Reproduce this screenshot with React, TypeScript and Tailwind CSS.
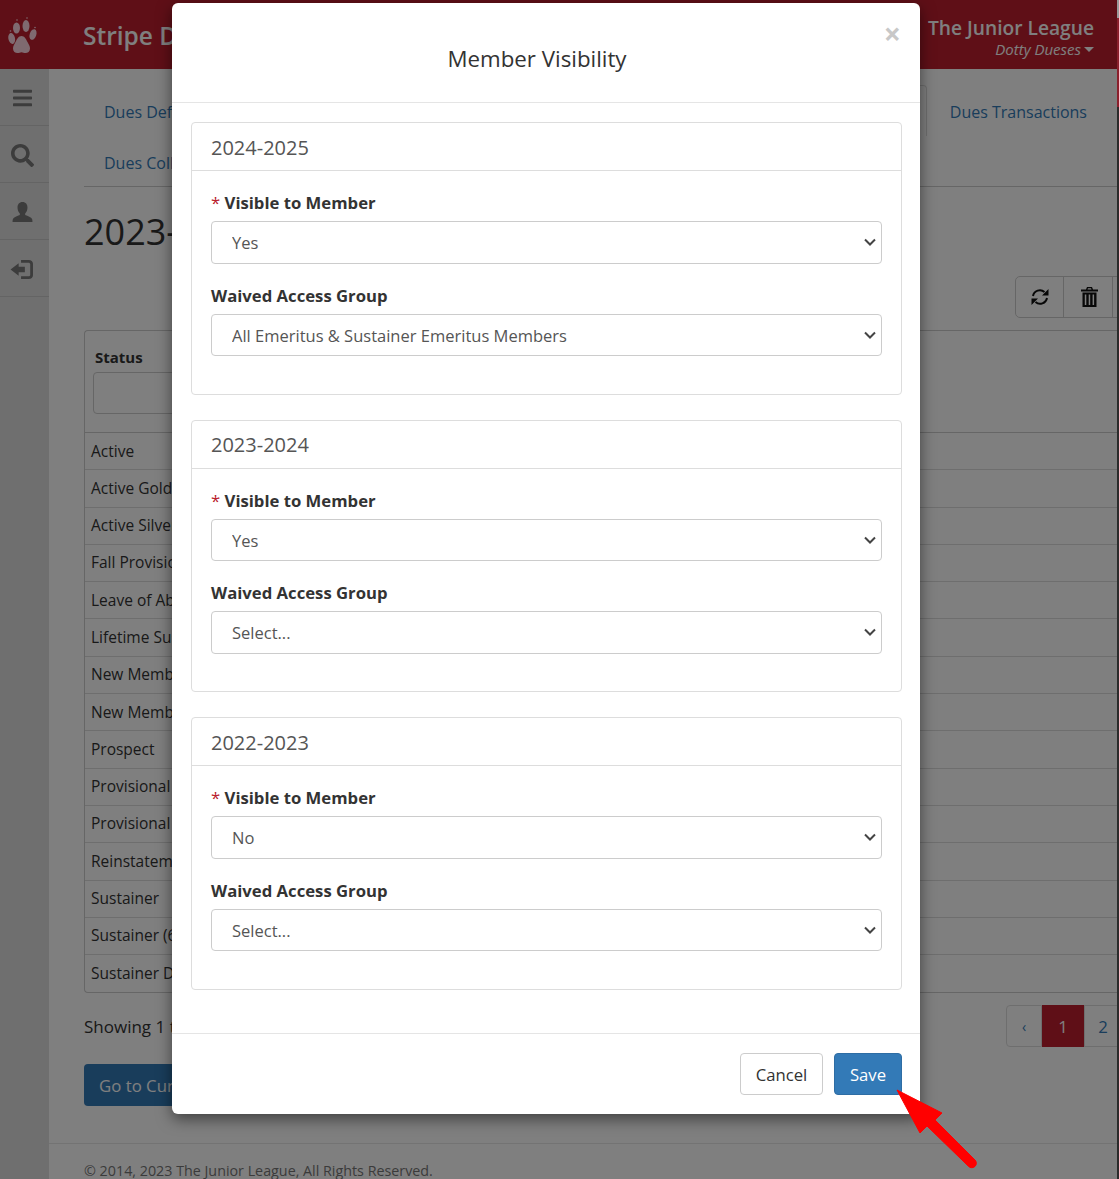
import { FaBars, FaSearch } from "react-icons/fa";

const statuses = [
  "Active",
  "Active Gold",
  "Active Silver",
  "Fall Provisional",
  "Leave of Absence",
  "Lifetime Sustainer",
  "New Member",
  "New Member II",
  "Prospect",
  "Provisional",
  "Provisional II",
  "Reinstatement",
  "Sustainer",
  "Sustainer (65+)",
  "Sustainer Dues",
];

const years = [
  { year: "2024-2025", visible: "Yes", group: "All Emeritus & Sustainer Emeritus Members" },
  { year: "2023-2024", visible: "Yes", group: "Select..." },
  { year: "2022-2023", visible: "No", group: "Select..." },
];

function PawIcon() {
  return (
    <svg viewBox="0 0 30 38" className="h-[38px] w-[30px]" fill="#ffd5e0">
      <ellipse cx="8.500" cy="12" rx="3.500" ry="5.500" />
      <ellipse cx="18" cy="10" rx="3.500" ry="6" />
      <ellipse cx="3.700" cy="22.500" rx="3.300" ry="5.500" transform="rotate(-12 3.700 22.500)" />
      <ellipse cx="25" cy="18.500" rx="3.300" ry="5.500" transform="rotate(18 25 18.500)" />
      <circle cx="9" cy="4" r="0.800" />
      <circle cx="19" cy="2" r="0.800" />
      <circle cx="2.500" cy="15" r="0.800" />
      <circle cx="27" cy="11.500" r="0.800" />
      <path d="M13.500 20c3 0 4.500 3 6 6 1.200 2.300 2.500 4 2.500 6.500 0 3-2.200 4.500-4.500 4.500-1.500 0-2.700-.8-4-.8s-2.500.8-4 .8C7.200 37 5 35.500 5 32.500 5 30 6.300 28.300 7.500 26c1.500-3 3-6 6-6z" />
    </svg>
  );
}

function UserIcon() {
  return (
    <svg viewBox="0 0 24 24" className="h-[23px] w-[23px]" fill="currentColor">
      <path d="M12 1c3.400 0 5.200 2.500 5.200 5.800 0 2.600-1 4.800-2.400 6.200v1.600c2.600 1.200 6.400 2.400 7.200 4.200.3.800.4 2.200.4 3.200H1.600c0-1 .1-2.400.4-3.200.8-1.800 4.600-3 7.200-4.200V13C7.800 11.600 6.800 9.400 6.800 6.800 6.800 3.500 8.600 1 12 1z" />
    </svg>
  );
}

function LoginIcon() {
  return (
    <svg viewBox="0 0 24 22" className="h-[21px] w-[24px]" fill="currentColor">
      <path d="M0 11l8.500-6.500V8H15v6H8.500v3.500z" />
      <path d="M11 1h8c2.700 0 4.500 1.600 4.500 4v12c0 2.400-1.800 4-4.500 4h-8v-2.800h7.500c1.300 0 2.100-.6 2.100-1.700V5.500c0-1.100-.8-1.700-2.100-1.700H11z" />
    </svg>
  );
}

function RefreshIcon() {
  return (
    <svg viewBox="0 0 18 18" className="h-[18px] w-[18px]" fill="currentColor">
      <path d="M2 8A7 7 0 0 1 13.500 4M16 10A7 7 0 0 1 4.500 14" fill="none" stroke="currentColor" strokeWidth="2" />
      <path d="M17.500 1v6.500H11zM.5 17v-6.500H7z" />
    </svg>
  );
}

function TrashIcon() {
  return (
    <svg viewBox="0 0 17 20" className="h-[20px] w-[17px]" fill="currentColor">
      <path d="M6 0h5l1 2.500h5V4.500H0V2.500h5zM7 1.200l-.5 1.300h4L10 1.200z" fillRule="evenodd" />
      <path d="M1.500 5.500h14V20h-14zM3.800 7.500v10.500h1.500V7.500zM7.700 7.500v10.500h1.500V7.500zM11.600 7.500v10.500h1.500V7.500z" fillRule="evenodd" />
    </svg>
  );
}

function Chevron() {
  return (
    <svg
      viewBox="0 0 12 8"
      className="pointer-events-none absolute top-1/2 right-[6px] h-[8px] w-[12px] -translate-y-1/2 text-[#444]"
      fill="none"
      stroke="currentColor"
      strokeWidth="2"
    >
      <path d="M1 1.500l5 5 5-5" />
    </svg>
  );
}

function SideButton({ children }: { children: React.ReactNode }) {
  return (
    <div className="flex h-[57px] items-center justify-center border-b border-[#c8c8c8] pt-[2px] pr-[5px] text-[#787878]">
      {children}
    </div>
  );
}

function Field({ value }: { value: string }) {
  return (
    <div className="relative">
      <select
        defaultValue={value}
        className="block h-[42.500px] w-full appearance-none rounded-[4px] border border-[#ccc] bg-white pt-[3px] pl-[20px] text-[16.500px] text-[#555]"
      >
        <option>{value}</option>
      </select>
      <Chevron />
    </div>
  );
}

function YearPanel({ year, visible, group }: { year: string; visible: string; group: string }) {
  return (
    <section className="rounded-[4px] border border-[#ddd] bg-white">
      <h3 className="flex h-[48px] items-center border-b border-[#ddd] px-[19px] pt-[2px] text-[20px] leading-none text-[#555]">
        {year}
      </h3>
      <div className="px-[19px] pt-[20px] pb-[37.500px]">
        <label className="mb-[5px] block h-[25px] text-[16.700px] leading-[23px] font-bold text-[#333]">
          <span className="font-normal text-[#b9202c]">*</span> Visible to Member
        </label>
        <Field value={visible} />
        <label className="mt-[20px] mb-[5px] block h-[25px] text-[16.700px] leading-[23px] font-bold text-[#333]">
          Waived Access Group
        </label>
        <Field value={group} />
      </div>
    </section>
  );
}

function BackgroundPage() {
  return (
    <div className="flex h-full flex-col bg-white text-[#333]">
      <header className="flex h-[69px] shrink-0 items-center justify-between bg-[#be1e2e] pr-[25px] text-white">
        <div className="flex items-center">
          <div className="ml-[8px] flex w-[30px] justify-center pt-[1px]">
            <PawIcon />
          </div>
          <span className="ml-[45px] pt-[4px] text-[24.500px] font-semibold">Stripe Dues</span>
        </div>
        <div className="pt-[4px] text-right">
          <div className="text-[19.200px] leading-[26px] font-semibold">The Junior League</div>
          <div className="flex items-center justify-end text-[15px] leading-[17px] italic">
            Dotty Dueses
            <span className="ml-[3px] h-0 w-0 border-x-[5px] border-t-[5px] border-x-transparent border-t-white" />
          </div>
        </div>
      </header>
      <div className="flex min-h-0 flex-1">
        <aside className="w-[49px] shrink-0 bg-[#dedede]">
          <SideButton>
            <FaBars className="h-[22px] w-[19px]" />
          </SideButton>
          <SideButton>
            <FaSearch className="h-[23px] w-[23px]" />
          </SideButton>
          <SideButton>
            <UserIcon />
          </SideButton>
          <SideButton>
            <LoginIcon />
          </SideButton>
        </aside>
        <main className="min-w-0 flex-1 overflow-hidden pl-[35px]">
          <nav className="h-[118px] border-b border-[#ccc] pl-[20px] text-[16px] text-[#337ab7]">
            <div className="flex h-[67px] items-end pr-[32px]">
              <span className="pb-[12px]">Dues Definitions</span>
              <div className="ml-[20px] h-[51px] flex-1 rounded-t-[4px] border-x border-t border-[#ddd]" />
              <span className="ml-[23px] pb-[12px]">Dues Transactions</span>
            </div>
            <div className="pt-[15px] leading-[25px]">Dues Collection</div>
          </nav>
          <h1 className="mt-[21px] h-[47px] text-[36px] leading-[47px] text-[#333]">2023-2024 Dues</h1>
          <div className="mt-[21px] flex h-[43px] justify-end">
            <div className="flex h-[42px] rounded-l-[5px] border border-[#ccc] text-[#111]">
              <div className="flex w-[48px] items-center justify-center border-r border-[#ccc]">
                <RefreshIcon />
              </div>
              <div className="flex w-[49px] items-center justify-center border-r border-[#ccc] pl-[2px]">
                <TrashIcon />
              </div>
              <div className="w-[5px]" />
            </div>
          </div>
          <div className="mt-[11px] rounded-tl-[4px] rounded-bl-[4px] border-y border-l border-[#ccc]">
            <div className="h-[102px] border-b border-[#ccc] px-[10px] pt-[14px]">
              <div className="text-[15px] leading-[24px] font-bold">Status</div>
              <div className="mt-[3px] ml-[-2px] h-[42px] w-[200px] rounded-[4px] border border-[#ccc]" />
            </div>
            {statuses.map((status) => (
              <div
                key={status}
                className="flex h-[37.300px] items-center border-b border-[#ddd] px-[6px] text-[15.500px] text-[#333] last:border-b-0"
              >
                {status}
              </div>
            ))}
          </div>
          <div className="mt-[12px] mr-[-7px] flex h-[42px] items-center justify-between">
            <span className="text-[17px]">Showing 1 to 15 of 25 entries</span>
            <div className="flex h-[42px] text-[16.800px] text-[#337ab7]">
              <span className="flex w-[36px] items-center justify-center rounded-l-[4px] border border-[#ddd] text-[14px]">‹</span>
              <span className="flex w-[42px] items-center justify-center bg-[#be1e2e] text-white">1</span>
              <span className="flex w-[42px] items-center justify-center border border-[#ddd] pr-[4px]">2</span>
            </div>
          </div>
          <div className="mt-[17px] flex h-[42px] w-[240px] items-center rounded-[4px] bg-[#337ab7] px-[15px] pt-[1px] text-[16.800px] text-white">
            Go to Current Year
          </div>
          <footer className="mt-[37px] ml-[-35px] border-t border-[#e7e7e7] pt-[16px] pl-[35px] text-[14.300px] text-[#777]">
            © 2014, 2023 The Junior League, All Rights Reserved.
          </footer>
        </main>
      </div>
    </div>
  );
}

export default function App() {
  return (
    <div
      className="relative h-[1179px] w-full overflow-hidden"
      style={{ fontFamily: '"Open Sans", "Noto Sans", sans-serif' }}
    >
      <BackgroundPage />
      <div className="absolute inset-0 bg-black/50" />

      {/* sliver of the window behind, visible at the right edge of the capture */}
      <div className="absolute top-0 right-0 flex h-full w-[2px] flex-col">
        <div className="h-[18px] bg-[#9a9a9a]" />
        <div className="h-[89px] bg-[#8a1f2c]" />
        <div className="flex-1 bg-[#2b2b2b]" />
      </div>

      <div className="absolute top-[3px] left-[172px] flex h-[1111px] w-[748px] flex-col rounded-[6px] bg-white shadow-[0_5px_15px_rgba(0,0,0,0.5)]">
        <div className="relative flex h-[100px] shrink-0 items-center justify-center border-b border-[#e5e5e5] pt-[12px] pr-[18px]">
          <h2 className="text-[22.300px] font-medium text-[#333]">Member Visibility</h2>
          <span className="absolute top-[15px] right-[19px] text-[30px] leading-[32px] font-bold text-[#c8c8c8]">×</span>
        </div>
        <div className="flex flex-1 flex-col gap-[25px] pt-[19px] pr-[18px] pl-[19px]">
          {years.map((y) => (
            <YearPanel key={y.year} {...y} />
          ))}
        </div>
        <div className="flex h-[81px] shrink-0 items-start justify-end gap-[11px] border-t border-[#e5e5e5] pt-[19px] pr-[18px]">
          <button className="h-[42px] w-[83px] rounded-[4px] border border-[#ccc] bg-white pt-[1px] text-[16.700px] text-[#333]">Cancel</button>
          <button className="h-[42px] w-[68px] rounded-[4px] border border-[#2e6da4] bg-[#337ab7] pt-[1px] text-[16.700px] text-white">Save</button>
        </div>
      </div>

      <svg className="absolute top-[1088px] left-[895px] h-[82px] w-[85px]" viewBox="0 0 85 82">
        <path d="M2 2L47 25L40 32L80 72a4.500 4.500 0 0 1-6.400 6.400L32 38L25 45z" fill="#ff0000" stroke="#ff0000" strokeLinejoin="round" />
      </svg>
    </div>
  );
}
